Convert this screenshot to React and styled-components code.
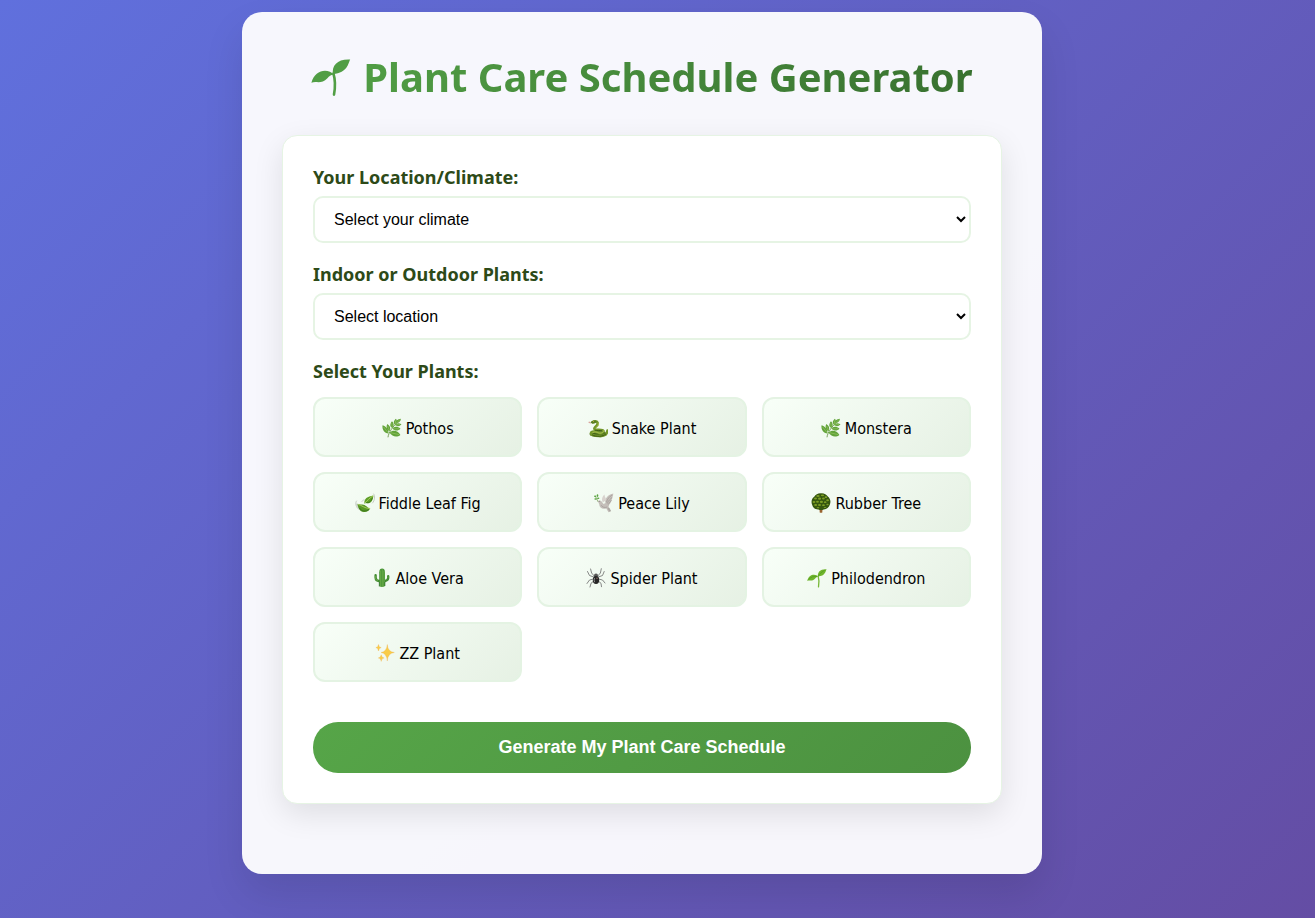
import React from 'react';
import styled, { createGlobalStyle } from 'styled-components';

const GlobalStyle = createGlobalStyle`
  *, *::before, *::after { box-sizing: border-box; }
  html { min-height: 100%; }
  body {
    margin: 0;
    min-height: 100vh;
    padding: 12px 31px 44px 0;
    background: linear-gradient(135deg, #6070dd 0%, #644da4 100%);
    color: #000;
    font-family: "DejaVu Sans Condensed", Tahoma, sans-serif;
    font-size: 16px;
  }
`;

const headingFont = '"Noto Sans", Tahoma, sans-serif';

const Container = styled.main`
  max-width: 800px;
  margin: 0 auto;
  padding: 40px 40px 70px;
  border-radius: 20px;
  background: rgba(255, 255, 255, 0.95);
  box-shadow: 0 20px 40px rgba(0, 0, 0, 0.1);
`;

const Title = styled.h1`
  display: flex;
  align-items: center;
  justify-content: center;
  gap: 12px;
  margin: 0 0 33px;
  font-family: ${headingFont};
  font-size: 40px;
  line-height: 50px;
  font-weight: 700;
  white-space: nowrap;
`;

const TitleText = styled.span`
  background: linear-gradient(135deg, #519e45, #38702f);
  background-clip: text;
  color: transparent;
`;

const Form = styled.form`
  padding: 30px;
  border: 1px solid #e6f4e4;
  border-radius: 15px;
  background: #fff;
  box-shadow: 0 10px 30px rgba(0, 0, 0, 0.1);
`;

const Group = styled.div`
  display: flex;
  flex-direction: column;
  gap: 8px;
  margin-bottom: 20px;
`;

const PlantGroup = styled.fieldset`
  margin: 0 0 40px;
  padding: 0;
  border: 0;
`;

const labelText = `
  color: #2d4a18;
  font-family: ${headingFont};
  font-size: 18px;
  line-height: 22px;
  font-weight: 700;
`;

const Label = styled.label`${labelText}`;
const Legend = styled.legend`
  ${labelText}
  padding: 0;
  margin-bottom: 15px;
`;

const Select = styled.select`
  width: 100%;
  height: 47px;
  padding: 12px 15px;
  border: 2px solid #e6f4e4;
  border-radius: 10px;
  background: #fff;
  color: #000;
  font: 16px "Liberation Sans", Arial, sans-serif;
`;

const Grid = styled.div`
  display: grid;
  grid-template-columns: repeat(auto-fit, minmax(180px, 1fr));
  gap: 15px;
`;

const PlantButton = styled.button`
  display: flex;
  align-items: center;
  justify-content: center;
  gap: 4px;
  height: 60px;
  padding: 2px 15px 0;
  border: 2px solid #e4f3e3;
  border-radius: 12px;
  background: linear-gradient(135deg, #f8fff8, #e6f1e4);
  color: #000;
  font: inherit;
  cursor: pointer;
`;

const Submit = styled.button`
  display: block;
  width: 100%;
  height: 51px;
  border: 0;
  border-radius: 25px;
  background: linear-gradient(135deg, #56a548, #4c9140);
  color: #fff;
  font: 700 18px "Liberation Sans", Arial, sans-serif;
  cursor: pointer;
`;

const Icon = ({ size = 20, children }) => (
  <svg width={size} height={size} viewBox="0 0 20 20" aria-hidden="true">{children}</svg>
);

const Sprout = ({ size, leaf = '#6fb52c', shade = '#4c961f', stem = '#79b83a' }) => (
  <Icon size={size}>
    <path d="M11.200 8.200C12.200 11.500 12.200 15 11.500 18.800" fill="none" stroke={stem} strokeWidth="1.300" strokeLinecap="round" />
    <path d="M11 8.600C10.300 4.200 13.400 .9 19.600 1.300C18.500 3.200 18.500 7.900 11 8.600Z" fill={leaf} />
    <path d="M11.500 8.900C8.500 5.300 1.800 6.200 .2 12.900C2.500 11.800 5.300 13.900 8.200 10.600C9.200 9.400 10.200 8.700 11.500 8.900Z" fill={leaf} />
    <path d="M11.400 7.900C12.500 6 14.900 3.700 17.800 2.100M1.500 11.600C4 8.900 7 7.900 10.300 8.600" fill="none" stroke={shade} strokeWidth=".6" />
  </Icon>
);

const Herb = () => (
  <Icon>
    <path d="M6 19.300C6.400 15 10.500 8.500 17.300 2.500" fill="none" stroke="#5a8c35" strokeWidth=".8" />
    <g fill="#62a33a">
      <path d="M18.900 .8C15.500 1.200 13.500 3 14.300 5.300C17 5 18.800 3.200 18.900.8Z" />
      <path d="M14 .8C11.200 3 11.200 5.700 13.300 6.800C15.400 5 15.400 2.700 14 .8Z" />
      <path d="M19.500 6.300C16.500 4.400 13.900 5.200 13 7.100C15.200 8.800 17.700 8.500 19.500 6.300Z" />
      <path d="M10 3.200C7.500 6.100 7.900 8.900 10.400 10C12.300 7.500 12 5.200 10 3.200Z" />
      <path d="M18.500 10.700C15.200 8 11.700 8.500 10.600 10.800C13 13.300 16.400 13 18.500 10.700Z" />
      <path d="M5.300 6C3.700 9.600 4.900 12.400 7.700 13.300C9 10.300 8 7.600 5.300 6Z" />
      <path d="M.5 7.200C0 11.700 2.400 15 6.500 15.500C6.700 11.500 4.500 8.500 .5 7.200Z" />
      <path d="M18.400 16.900C15.500 12.200 10.600 11.800 7.600 14.700C10.200 18.700 14.900 19.500 18.400 16.900Z" />
    </g>
    <path d="M18 1.500L14.600 5M13.600 2.500L13.300 6M18 6.500L13.500 7.100M9.800 5L10.200 9M17 10.700L11.200 10.900M5.700 8L7.400 12.300M1.600 9L6 14.600M17 16.600L8.700 14.700" stroke="#a8cf70" strokeWidth=".5" fill="none" />
  </Icon>
);

const Snake = () => (
  <Icon>
    <path d="M.4 4.300L2.500 5M1 3.700L2.500 5" stroke="#c34c46" strokeWidth=".4" />
    <ellipse cx="10.300" cy="16" rx="8.800" ry="3" fill="#41611a" />
    <path d="M19.500 12.600C19 16.500 16.300 18.300 11 18C6 17.800 2.800 17.300 3 15.300C3.400 13 8 13.500 10 14.500C13 16 16 14.500 15.300 12.700C14.500 11 7 12.500 6.400 10.700C6.100 9.300 10.400 7.700 9.600 4.900C9.100 3.200 6.500 2.900 4.600 4.300" fill="none" stroke="#729629" strokeWidth="2.700" strokeLinecap="round" />
    <path d="M4.500 14.500C7 13.300 9 14.200 10.900 15C13.800 15.700 16.200 13.800 15.400 12.400M7.400 10.300C9.700 8.500 11 7 10.100 4.600" fill="none" stroke="#b8c95b" strokeWidth=".8" />
    <path d="M4 16.800C8 19 15 18.900 18 15.800M7 12.200C9 12.900 12 12 14 12.900" fill="none" stroke="#26440d" strokeWidth=".7" />
    <path d="M2.500 4.600C3.500 2.600 6.600 1.700 8.600 3.200C8 5.700 4.500 6.100 2.500 4.600Z" fill="#597e24" />
    <circle cx="5.500" cy="3.500" r=".5" fill="#d9aa34" />
  </Icon>
);

const FlutterLeaves = () => (
  <Icon>
    <path d="M1.500 8C-.2 10 1.200 14.500 3.300 16M17.500 10C20 7.500 20.100 3 18.700 1M7 8.500L9 6.500M1.700 11.200C2.500 14.700 5 17.600 8 18.600" fill="none" stroke="#bfc5be" strokeWidth=".9" strokeLinecap="round" />
    <path d="M9.500 10.800C8.600 5.600 12.500 3.400 18.400 2.400C18 7 16.300 11.100 11 10.100Z" fill="#5e9f28" />
    <path d="M2.400 10.800C3 15.700 5.600 19.200 9.300 19C12 19.100 14.300 17.600 15.300 15.600C12.300 15 10.800 11.700 7.200 11.600C5.300 11.500 3.800 11.400 2.400 10.800Z" fill="#569725" />
    <path d="M9.800 10.200C12 7.800 14.700 5 18 2.800M3 11.400C6.400 12 9.800 15.600 15 15.500" fill="none" stroke="#b9d66a" strokeWidth=".8" />
    <path d="M11.100 9.800C14 10.200 16.500 8 17.300 5.200M4.200 14.700C6.300 18.400 10.900 18.900 14 16.500" fill="none" stroke="#326b18" strokeWidth=".7" />
  </Icon>
);

const Dove = () => (
  <Icon>
    <path d="M11.500 10C9.900 6 14.500 1.500 19.300.6C18.900 2 19.400 2.600 18.500 3.800C18.800 5 18 5.700 17.700 6.500C17.800 8 16.800 9.500 15.300 11.400L14.500 14L17 18.200L14.500 19.300L12.300 15.500C8 16.500 5.500 14.800 5.200 11.300C4.600 9.800 4.400 8.800 3.500 8.300L5.300 7.200C7.200 7.300 8.300 9.500 9.500 11Z" fill="#c5bfba" />
    <path d="M8.800 9.500C7.100 6 8.500 3.500 10.500 1.500C10.500 3.500 11.800 4.700 12.300 7Z" fill="#d8d3ce" />
    <path d="M12.400 9.500C13.100 6 15.900 3.300 18 2M13.300 10.500C14.200 7.500 16.500 6 18 4.500M14.300 11.500C15 9.800 16.500 8.500 17.500 7M7.200 12.200C8.300 14.400 10.600 14.900 13.300 14M14 15L15.800 18.500M14.900 14.600L16.600 18" fill="none" stroke="#8f8985" strokeWidth=".5" />
    <path d="M.8 3.300C2.500 4 3 6.400 3.900 8.700" fill="none" stroke="#618c3b" strokeWidth=".6" />
    <g fill="#57a33d"><ellipse cx="1.200" cy="3.300" rx="1.200" ry=".8" /><ellipse cx="3.500" cy="2.600" rx=".8" ry="1.300" /><ellipse cx="1.600" cy="6" rx="1.300" ry=".8" /><ellipse cx="4.200" cy="5.200" rx="1.200" ry=".8" /></g>
    <circle cx="5.200" cy="8.600" r=".35" fill="#333" />
  </Icon>
);

const Tree = () => (
  <Icon>
    <path d="M8.500 15H11.500L11.300 19.500Q10 20 8.700 19.500Z" fill="#996330" />
    <path d="M10 .4C13 .1 15.500 1.700 16.800 3.500C19.400 5.400 20 8.800 18.900 11.500C18 14.400 15.500 16.500 12.700 16.400C11 17.300 9 17.300 7.400 16.400C4.300 16.600 1.800 14.600 1.200 11.900C-.1 9.200.5 5.500 3.200 3.700C4.700 1.500 7.300.1 10 .4Z" fill="#35570f" />
    <g fill="#7d9e25">
      <ellipse cx="7" cy="2.900" rx="1.700" ry="1" /><ellipse cx="11.500" cy="2.300" rx="1.700" ry=".9" /><ellipse cx="14.900" cy="4.200" rx="1.300" ry=".9" />
      <ellipse cx="4.500" cy="5.500" rx="1.500" ry="1.100" /><ellipse cx="8.600" cy="5.700" rx="1.600" ry="1.100" /><ellipse cx="12.400" cy="5.600" rx="1.400" ry="1" /><ellipse cx="16.600" cy="7.200" rx="1.400" ry="1" />
      <ellipse cx="3" cy="9" rx="1.400" ry="1" /><ellipse cx="6.500" cy="8.700" rx="1.400" ry="1" /><ellipse cx="10.400" cy="8.900" rx="1.600" ry="1.100" /><ellipse cx="14.200" cy="9.200" rx="1.300" ry=".9" />
      <ellipse cx="4.600" cy="12" rx="1.500" ry=".9" /><ellipse cx="8.500" cy="12" rx="1.500" ry=".9" /><ellipse cx="12.500" cy="12.200" rx="1.400" ry=".9" /><ellipse cx="16.500" cy="11.500" rx="1.200" ry=".8" />
      <ellipse cx="7" cy="14.700" rx="1.300" ry=".6" /><ellipse cx="14" cy="14.500" rx="1.300" ry=".6" />
    </g>
  </Icon>
);

const Cactus = () => (
  <Icon>
    <path d="M3.600 7.200V9.500Q3.800 13 7 13L10 13.500M16.200 8.200V10Q16 12.500 13 13L10 13.500" fill="none" stroke="#438c32" strokeWidth="2.400" strokeLinecap="round" />
    <path d="M7.200 18V4.200C7.200 1.600 8.500.5 10.100.5S13 1.600 13 4.200V18Q10 20 7.200 18Z" fill="#4a9638" />
    <path d="M8.600 2.500V18.500M10.300 1.500V19M12 3V18.300M3.400 8V10Q3.700 12 6 12.900M16 8.500V10" fill="none" stroke="#80ba54" strokeWidth=".55" />
    <path d="M7.300 14V18.500M12.900 14V18" stroke="#296a25" strokeWidth=".7" />
  </Icon>
);

const Spider = () => (
  <Icon>
    <path d="M8.500 8.300L5.600 5L4.600 1M8.300 9.200L3.500 7.500L1.500 3.500M8.200 10.800L3.500 12L1 15.500M8.600 12.300L5 15.300L4 19M11.500 8.300L14.400 5L15.300 .7M11.700 9.200L16.500 7.500L18.200 3.500M11.800 10.800L16.500 12L19 15M11.400 12.300L15 15.300L15.500 18.700" fill="none" stroke="#6b6b6b" strokeWidth=".8" strokeLinejoin="round" strokeLinecap="round" />
    <ellipse cx="10" cy="7.400" rx="2" ry="1.900" fill="#565656" />
    <ellipse cx="10" cy="12" rx="3.200" ry="4" fill="#262626" />
    <path d="M8.500 10Q7.500 12 8.700 14.200" fill="none" stroke="#aaa" strokeWidth=".8" />
    <circle cx="11" cy="10.200" r=".7" fill="#9b706a" />
  </Icon>
);

const Sparkles = () => (
  <Icon>
    <g fill="#f9cc48" stroke="#edaa45" strokeWidth=".3">
      <path d="M12.300 1.500Q12.700 8.800 19.300 9.500Q12.700 10.200 12.300 18Q11.700 10.200 6 9.500Q11.700 8.800 12.300 1.500Z" />
      <path d="M3.500 1.500Q3.700 4.300 6.200 4.600Q3.800 5 3.500 8Q3.200 5 .9 4.600Q3.300 4.300 3.500 1.500Z" />
      <path d="M6.200 11.800Q6.500 14.600 9.100 15Q6.500 15.300 6.200 18.400Q5.900 15.300 3.300 15Q5.900 14.600 6.200 11.800Z" />
    </g>
  </Icon>
);

const plants = [
  ['Pothos', Herb],
  ['Snake Plant', Snake],
  ['Monstera', Herb],
  ['Fiddle Leaf Fig', FlutterLeaves],
  ['Peace Lily', Dove],
  ['Rubber Tree', Tree],
  ['Aloe Vera', Cactus],
  ['Spider Plant', Spider],
  ['Philodendron', Sprout],
  ['ZZ Plant', Sparkles],
];

export default function App() {
  return (
    <>
      <GlobalStyle />
      <Container>
        <Title>
          <Sprout size={40} leaf="#519e45" shade="#519e45" stem="#519e45" />
          <TitleText>Plant Care Schedule Generator</TitleText>
        </Title>
        <Form onSubmit={(e) => e.preventDefault()}>
          <Group>
            <Label htmlFor="climate">Your Location/Climate:</Label>
            <Select id="climate" defaultValue="">
              <option value="">Select your climate</option>
            </Select>
          </Group>
          <Group>
            <Label htmlFor="location">Indoor or Outdoor Plants:</Label>
            <Select id="location" defaultValue="">
              <option value="">Select location</option>
            </Select>
          </Group>
          <PlantGroup>
            <Legend>Select Your Plants:</Legend>
            <Grid>
              {plants.map(([name, Picture]) => (
                <PlantButton key={name} type="button">
                  <Picture />
                  <span>{name}</span>
                </PlantButton>
              ))}
            </Grid>
          </PlantGroup>
          <Submit type="submit">Generate My Plant Care Schedule</Submit>
        </Form>
      </Container>
    </>
  );
}
